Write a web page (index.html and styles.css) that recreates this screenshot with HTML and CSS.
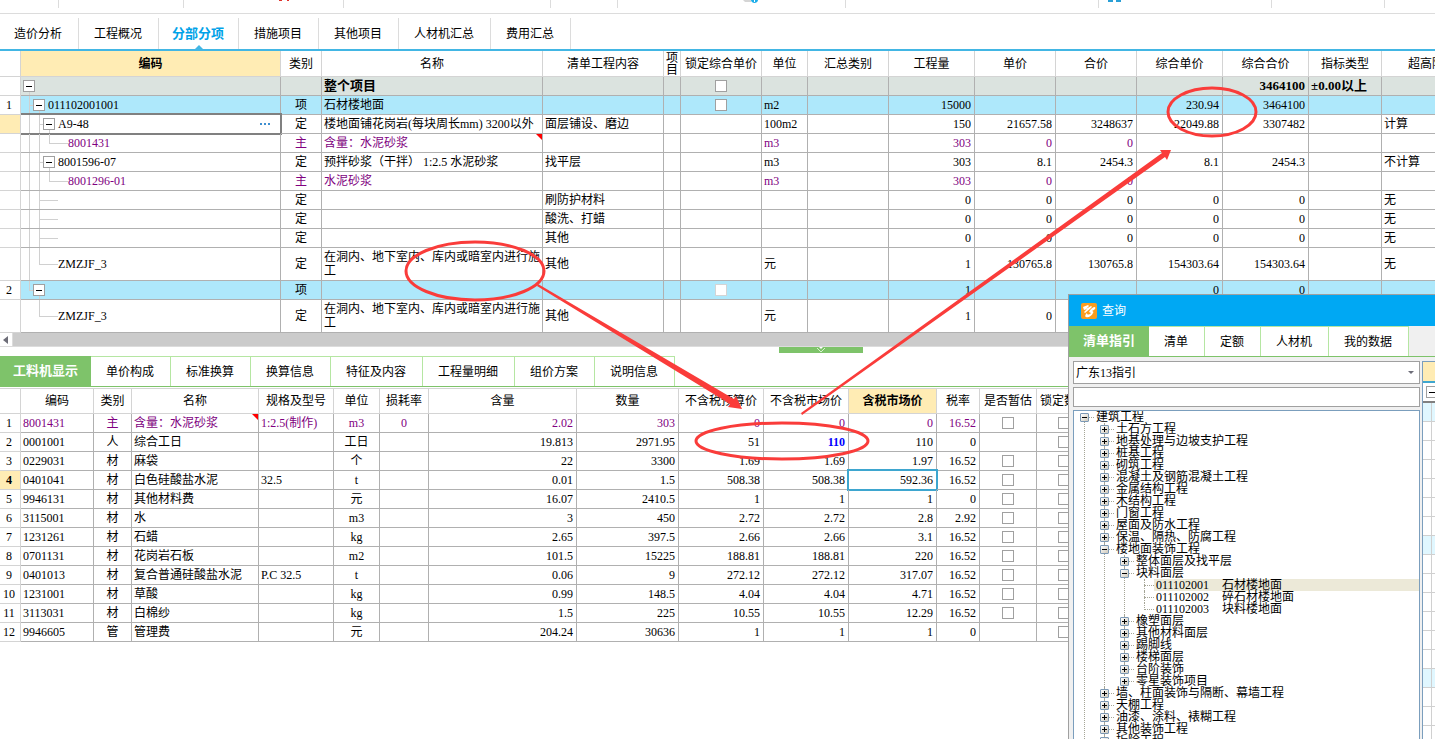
FILE: index.html
```html
<!DOCTYPE html>
<html lang="zh-CN">
<head>
<meta charset="utf-8">
<title>分部分项</title>
<link rel="stylesheet" href="styles.css">
</head>
<body>
<main class="app">
<div class="toolbar">
<span class="group w1"></span><span class="group w2"></span>
<span class="group w3"><svg width="10" height="2" viewBox="0 0 10 2"><path d="M0 0h3M8 0h2" stroke="#e0322c" stroke-width="2"/></svg></span>
<span class="group w4"></span><span class="group w5"></span>
<span class="group w6"><svg width="16" height="4" viewBox="0 0 16 4"><path d="M0 0h8v2H2z" fill="#d5d5d5"/><path d="M8 0h7c0 2-2 3-3.500 3S8 2 8 0z" fill="#1badea"/><path d="M11.500 0v2" stroke="#fff"/></svg></span>
<span class="group w7"></span>
<span class="group w8"><svg width="14" height="2" viewBox="0 0 14 2"><path d="M0 0h5v2H0zM8 0h5v2H8z" fill="#2a9fd6"/></svg></span>
<span class="group w9"></span>
</div>
<nav class="tabs top-tabs">
<button class="tab">造价分析</button><button class="tab">工程概况</button><button class="tab active">分部分项</button><button class="tab">措施项目</button><button class="tab">其他项目</button><button class="tab">人材机汇总</button><button class="tab">费用汇总</button>
</nav>

<div class="grid-view">
<table class="grid bill">
<colgroup><col class="c21"><col class="c260"><col class="c41"><col class="c221"><col class="c121"><col class="c17"><col class="c81"><col class="c46"><col class="c81"><col class="c86"><col class="c81"><col class="c81"><col class="c86"><col class="c86"><col class="c73"><col class="c101"></colgroup>
<thead><tr><th></th><th class="current">编码</th><th>类别</th><th>名称</th><th>清单工程内容</th><th class="narrow">项目</th><th>锁定综合单价</th><th>单位</th><th>汇总类别</th><th>工程量</th><th>单价</th><th>合价</th><th>综合单价</th><th>综合合价</th><th>指标类型</th><th>超高降效</th></tr></thead>
<tbody>
<tr class="total"><td class="no"></td><td class="code"><div class="branch"><button class="toggle root" aria-label="折叠"></button></div></td><td></td><td>整个项目</td><td></td><td></td><td class="mid"><input type="checkbox" aria-label="锁定综合单价"></td><td></td><td></td><td></td><td></td><td></td><td></td><td class="num">3464100</td><td>±0.00以上</td><td></td></tr>
<tr class="item"><td class="no">1</td><td class="code"><div class="branch"><i class="tee"></i><button class="toggle" aria-label="折叠"></button>011102001001</div></td><td class="mid">项</td><td>石材楼地面</td><td></td><td></td><td class="mid"><input type="checkbox" aria-label="锁定综合单价"></td><td>m2</td><td></td><td class="num">15000</td><td></td><td></td><td class="num">230.94</td><td class="num">3464100</td><td></td><td></td></tr>
<tr><td class="no now"></td><td class="code editing"><div class="branch"><i class="bar"></i><i class="tee"></i><button class="toggle" aria-label="折叠"></button>A9-48<button class="more" aria-label="更多"><b></b><b></b><b></b></button></div></td><td class="mid">定</td><td>楼地面铺花岗岩(每块周长mm) 3200以外</td><td>面层铺设、磨边</td><td></td><td></td><td>100m2</td><td></td><td class="num">150</td><td class="num">21657.58</td><td class="num">3248637</td><td class="num">22049.88</td><td class="num">3307482</td><td></td><td>计算</td></tr>
<tr class="main"><td class="no"></td><td class="code"><div class="branch"><i class="bar"></i><i class="bar"></i><i class="end"></i>8001431</div></td><td class="mid">主</td><td class="note">含量：水泥砂浆</td><td></td><td></td><td></td><td>m3</td><td></td><td class="num">303</td><td class="num">0</td><td class="num">0</td><td></td><td></td><td></td><td></td></tr>
<tr><td class="no"></td><td class="code"><div class="branch"><i class="bar"></i><i class="tee"></i><button class="toggle" aria-label="折叠"></button>8001596-07</div></td><td class="mid">定</td><td>预拌砂浆（干拌） 1:2.5 水泥砂浆</td><td>找平层</td><td></td><td></td><td>m3</td><td></td><td class="num">303</td><td class="num">8.1</td><td class="num">2454.3</td><td class="num">8.1</td><td class="num">2454.3</td><td></td><td>不计算</td></tr>
<tr class="main"><td class="no"></td><td class="code"><div class="branch"><i class="bar"></i><i class="bar"></i><i class="end"></i>8001296-01</div></td><td class="mid">主</td><td>水泥砂浆</td><td></td><td></td><td></td><td>m3</td><td></td><td class="num">303</td><td class="num">0</td><td class="num">0</td><td></td><td></td><td></td><td></td></tr>
<tr><td class="no"></td><td class="code"><div class="branch"><i class="bar"></i><i class="tee long"></i></div></td><td class="mid">定</td><td></td><td>刷防护材料</td><td></td><td></td><td></td><td></td><td class="num">0</td><td class="num">0</td><td class="num">0</td><td class="num">0</td><td class="num">0</td><td></td><td>无</td></tr>
<tr><td class="no"></td><td class="code"><div class="branch"><i class="bar"></i><i class="tee long"></i></div></td><td class="mid">定</td><td></td><td>酸洗、打蜡</td><td></td><td></td><td></td><td></td><td class="num">0</td><td class="num">0</td><td class="num">0</td><td class="num">0</td><td class="num">0</td><td></td><td>无</td></tr>
<tr><td class="no"></td><td class="code"><div class="branch"><i class="bar"></i><i class="tee long"></i></div></td><td class="mid">定</td><td></td><td>其他</td><td></td><td></td><td></td><td></td><td class="num">0</td><td class="num">0</td><td class="num">0</td><td class="num">0</td><td class="num">0</td><td></td><td>无</td></tr>
<tr class="tall"><td class="no"></td><td class="code"><div class="branch"><i class="bar"></i><i class="end"></i>ZMZJF_3</div></td><td class="mid">定</td><td class="wrap">在洞内、地下室内、库内或暗室内进行施工</td><td>其他</td><td></td><td></td><td>元</td><td></td><td class="num">1</td><td class="num">130765.8</td><td class="num">130765.8</td><td class="num">154303.64</td><td class="num">154303.64</td><td></td><td>无</td></tr>
<tr class="item"><td class="no">2</td><td class="code"><div class="branch"><i class="end short"></i><button class="toggle" aria-label="折叠"></button></div></td><td class="mid">项</td><td></td><td></td><td></td><td class="mid"><input type="checkbox" class="faint" aria-label="锁定综合单价"></td><td></td><td></td><td class="num">1</td><td></td><td></td><td class="num">0</td><td class="num">0</td><td></td><td></td></tr>
<tr class="tall"><td class="no"></td><td class="code"><div class="branch"><i class="blank"></i><i class="end"></i>ZMZJF_3</div></td><td class="mid">定</td><td class="wrap">在洞内、地下室内、库内或暗室内进行施工</td><td>其他</td><td></td><td></td><td>元</td><td></td><td class="num">1</td><td class="num">0</td><td></td><td></td><td></td><td></td><td></td></tr>
</tbody>
</table>
</div>
<div class="scrollbar"><button class="scroll-left" aria-label="向左滚动"></button></div>
<div class="splitter"><button class="handle" aria-label="收起"><svg width="10" height="6" viewBox="0 0 10 6"><path d="M3 0h4L5 2z" fill="#fff"/><path d="M1 1l4 4 4-4" fill="none" stroke="#d8f3cf"/></svg></button></div>

<nav class="tabs green-tabs">
<button class="tab active">工料机显示</button><button class="tab">单价构成</button><button class="tab">标准换算</button><button class="tab">换算信息</button><button class="tab">特征及内容</button><button class="tab">工程量明细</button><button class="tab">组价方案</button><button class="tab">说明信息</button>
</nav>
<div class="grid-view lower">
<table class="grid detail">
<colgroup><col class="c21"><col class="c73"><col class="c38"><col class="c127"><col class="c75"><col class="c46"><col class="c49"><col class="c148"><col class="c102"><col class="c85"><col class="c85"><col class="c88"><col class="c43"><col class="c57"><col class="c55"></colgroup>
<thead><tr><th></th><th>编码</th><th>类别</th><th>名称</th><th>规格及型号</th><th>单位</th><th>损耗率</th><th>含量</th><th>数量</th><th>不含税预算价</th><th>不含税市场价</th><th class="current">含税市场价</th><th>税率</th><th>是否暂估</th><th>锁定数量</th></tr></thead>
<tbody>
<tr class="main"><td class="no">1</td><td>8001431</td><td class="mid">主</td><td class="note">含量：水泥砂浆</td><td>1:2.5(制作)</td><td class="mid">m3</td><td class="mid">0</td><td class="num">2.02</td><td class="num">303</td><td class="num">0</td><td class="num">0</td><td class="num">0</td><td class="num">16.52</td><td class="mid"><input type="checkbox" aria-label="是否暂估"></td><td class="mid"><input type="checkbox" aria-label="锁定数量"></td></tr>
<tr><td class="no">2</td><td>0001001</td><td class="mid">人</td><td>综合工日</td><td></td><td class="mid">工日</td><td></td><td class="num">19.813</td><td class="num">2971.95</td><td class="num">51</td><td class="num changed">110</td><td class="num">110</td><td class="num">0</td><td></td><td class="mid"><input type="checkbox" aria-label="锁定数量"></td></tr>
<tr><td class="no">3</td><td>0229031</td><td class="mid">材</td><td>麻袋</td><td></td><td class="mid">个</td><td></td><td class="num">22</td><td class="num">3300</td><td class="num">1.69</td><td class="num">1.69</td><td class="num">1.97</td><td class="num">16.52</td><td class="mid"><input type="checkbox" aria-label="是否暂估"></td><td class="mid"><input type="checkbox" aria-label="锁定数量"></td></tr>
<tr><td class="no now">4</td><td>0401041</td><td class="mid">材</td><td>白色硅酸盐水泥</td><td>32.5</td><td class="mid">t</td><td></td><td class="num">0.01</td><td class="num">1.5</td><td class="num">508.38</td><td class="num">508.38</td><td class="num focus">592.36</td><td class="num">16.52</td><td class="mid"><input type="checkbox" aria-label="是否暂估"></td><td class="mid"><input type="checkbox" aria-label="锁定数量"></td></tr>
<tr><td class="no">5</td><td>9946131</td><td class="mid">材</td><td>其他材料费</td><td></td><td class="mid">元</td><td></td><td class="num">16.07</td><td class="num">2410.5</td><td class="num">1</td><td class="num">1</td><td class="num">1</td><td class="num">0</td><td class="mid"><input type="checkbox" aria-label="是否暂估"></td><td class="mid"><input type="checkbox" aria-label="锁定数量"></td></tr>
<tr><td class="no">6</td><td>3115001</td><td class="mid">材</td><td>水</td><td></td><td class="mid">m3</td><td></td><td class="num">3</td><td class="num">450</td><td class="num">2.72</td><td class="num">2.72</td><td class="num">2.8</td><td class="num">2.92</td><td class="mid"><input type="checkbox" aria-label="是否暂估"></td><td class="mid"><input type="checkbox" aria-label="锁定数量"></td></tr>
<tr><td class="no">7</td><td>1231261</td><td class="mid">材</td><td>石蜡</td><td></td><td class="mid">kg</td><td></td><td class="num">2.65</td><td class="num">397.5</td><td class="num">2.66</td><td class="num">2.66</td><td class="num">3.1</td><td class="num">16.52</td><td class="mid"><input type="checkbox" aria-label="是否暂估"></td><td class="mid"><input type="checkbox" aria-label="锁定数量"></td></tr>
<tr><td class="no">8</td><td>0701131</td><td class="mid">材</td><td>花岗岩石板</td><td></td><td class="mid">m2</td><td></td><td class="num">101.5</td><td class="num">15225</td><td class="num">188.81</td><td class="num">188.81</td><td class="num">220</td><td class="num">16.52</td><td class="mid"><input type="checkbox" aria-label="是否暂估"></td><td class="mid"><input type="checkbox" aria-label="锁定数量"></td></tr>
<tr><td class="no">9</td><td>0401013</td><td class="mid">材</td><td>复合普通硅酸盐水泥</td><td>P.C 32.5</td><td class="mid">t</td><td></td><td class="num">0.06</td><td class="num">9</td><td class="num">272.12</td><td class="num">272.12</td><td class="num">317.07</td><td class="num">16.52</td><td class="mid"><input type="checkbox" aria-label="是否暂估"></td><td class="mid"><input type="checkbox" aria-label="锁定数量"></td></tr>
<tr><td class="no">10</td><td>1231001</td><td class="mid">材</td><td>草酸</td><td></td><td class="mid">kg</td><td></td><td class="num">0.99</td><td class="num">148.5</td><td class="num">4.04</td><td class="num">4.04</td><td class="num">4.71</td><td class="num">16.52</td><td class="mid"><input type="checkbox" aria-label="是否暂估"></td><td class="mid"><input type="checkbox" aria-label="锁定数量"></td></tr>
<tr><td class="no">11</td><td>3113031</td><td class="mid">材</td><td>白棉纱</td><td></td><td class="mid">kg</td><td></td><td class="num">1.5</td><td class="num">225</td><td class="num">10.55</td><td class="num">10.55</td><td class="num">12.29</td><td class="num">16.52</td><td class="mid"><input type="checkbox" aria-label="是否暂估"></td><td class="mid"><input type="checkbox" aria-label="锁定数量"></td></tr>
<tr><td class="no">12</td><td>9946605</td><td class="mid">管</td><td>管理费</td><td></td><td class="mid">元</td><td></td><td class="num">204.24</td><td class="num">30636</td><td class="num">1</td><td class="num">1</td><td class="num">1</td><td class="num">0</td><td></td><td class="mid"><input type="checkbox" aria-label="锁定数量"></td></tr>
</tbody>
</table>
</div>

<section class="dialog" aria-label="查询">
<header class="title"><svg width="16" height="16" viewBox="0 0 16 16"><rect width="16" height="16" rx="2" fill="#fb9d1e"/><path d="M2 4l5-2 1 1-3 3 5-3c1 0 1 1 0 2L4 10 3 9l3-3-3 1z" fill="#fff"/><path d="M14 4c1 1 0 3-3 4 1 0 2 1 1 2-1 3-5 5-7 4-1 0-1-2 0-3l1-1c0 2 2 2 4 0l-2-1c1-3 4-5 6-5z" fill="#fff"/></svg>查询</header>
<nav class="tabs green-tabs dialog-tabs"><button class="tab active">清单指引</button><button class="tab">清单</button><button class="tab">定额</button><button class="tab">人材机</button><button class="tab">我的数据</button></nav>
<div class="dialog-body">
<div class="query">
<div class="select-box"><select aria-label="指引"><option>广东13指引</option></select></div>
<input class="search" type="text" aria-label="查找">
<div class="tree">
<ul>
<li><div class="node"><button class="box minus" aria-label="折叠"></button><span>建筑工程</span></div>
<ul>
<li><div class="node"><button class="box" aria-label="展开"></button><span>土石方工程</span></div></li>
<li><div class="node"><button class="box" aria-label="展开"></button><span>地基处理与边坡支护工程</span></div></li>
<li><div class="node"><button class="box" aria-label="展开"></button><span>桩基工程</span></div></li>
<li><div class="node"><button class="box" aria-label="展开"></button><span>砌筑工程</span></div></li>
<li><div class="node"><button class="box" aria-label="展开"></button><span>混凝土及钢筋混凝土工程</span></div></li>
<li><div class="node"><button class="box" aria-label="展开"></button><span>金属结构工程</span></div></li>
<li><div class="node"><button class="box" aria-label="展开"></button><span>木结构工程</span></div></li>
<li><div class="node"><button class="box" aria-label="展开"></button><span>门窗工程</span></div></li>
<li><div class="node"><button class="box" aria-label="展开"></button><span>屋面及防水工程</span></div></li>
<li><div class="node"><button class="box" aria-label="展开"></button><span>保温、隔热、防腐工程</span></div></li>
<li><div class="node"><button class="box minus" aria-label="折叠"></button><span>楼地面装饰工程</span></div>
<ul>
<li><div class="node"><button class="box" aria-label="展开"></button><span>整体面层及找平层</span></div></li>
<li><div class="node"><button class="box minus" aria-label="折叠"></button><span>块料面层</span></div>
<ul>
<li><div class="node leaf selected"><span><b>011102001</b>石材楼地面</span></div></li>
<li><div class="node leaf"><span><b>011102002</b>碎石材楼地面</span></div></li>
<li class="last"><div class="node leaf"><span><b>011102003</b>块料楼地面</span></div></li>
</ul></li>
<li><div class="node"><button class="box" aria-label="展开"></button><span>橡塑面层</span></div></li>
<li><div class="node"><button class="box" aria-label="展开"></button><span>其他材料面层</span></div></li>
<li><div class="node"><button class="box" aria-label="展开"></button><span>踢脚线</span></div></li>
<li><div class="node"><button class="box" aria-label="展开"></button><span>楼梯面层</span></div></li>
<li><div class="node"><button class="box" aria-label="展开"></button><span>台阶装饰</span></div></li>
<li class="last"><div class="node"><button class="box" aria-label="展开"></button><span>零星装饰项目</span></div></li>
</ul></li>
<li><div class="node"><button class="box" aria-label="展开"></button><span>墙、柱面装饰与隔断、幕墙工程</span></div></li>
<li><div class="node"><button class="box" aria-label="展开"></button><span>天棚工程</span></div></li>
<li><div class="node"><button class="box" aria-label="展开"></button><span>油漆、涂料、裱糊工程</span></div></li>
<li><div class="node"><button class="box" aria-label="展开"></button><span>其他装饰工程</span></div></li>
<li><div class="node"><button class="box" aria-label="展开"></button><span>拆除工程</span></div></li>
</ul></li>
</ul>
</div>
</div>
<div class="side">
<div class="side-head"></div>
<div class="side-row first"><button class="toggle" aria-label="折叠"></button></div>
<div class="side-row tint"></div><div class="side-row"></div><div class="side-row"></div><div class="side-row"></div><div class="side-row"></div><div class="side-row"></div><div class="side-row"></div><div class="side-row tint"></div><div class="side-row"></div><div class="side-row"></div><div class="side-row"></div><div class="side-row"></div><div class="side-row"></div><div class="side-row"></div><div class="side-row tint"></div><div class="side-row"></div><div class="side-row"></div><div class="side-row"></div>
</div>
</div>
</section>

<svg class="marks" width="1435" height="739" viewBox="0 0 1435 739" aria-hidden="true">
<g fill="none" stroke="#fa3c3a" stroke-width="3"><ellipse cx="475" cy="271" rx="69" ry="29"/><ellipse cx="1212" cy="112" rx="44" ry="24"/><ellipse cx="782" cy="441" rx="86" ry="18"/></g>
<g fill="#fa3c3a"><path d="M538 284L734 399l2-3 6 13-14-2 2-3L537 286z"/><path d="M801 413L1162 153l-2-3 11 0-4 10-2-3L802 415z"/></g>
</svg>
</main>
</body>
</html>
```
FILE: styles.css
```css
* { box-sizing: border-box; }
body { margin: 0; overflow: hidden; background: #fff; color: #000; font: 12px/14px "Liberation Serif", "Noto Sans CJK SC", serif; }
button, input, select { font: inherit; color: inherit; margin: 0; padding: 0; border: 0; border-radius: 0; background: none; }
.app { position: relative; height: 100vh; overflow: hidden; display: flex; flex-direction: column; }
.app > * { flex: none; }

.toolbar { display: flex; height: 14px; border-bottom: 1px solid #dcdcdc; overflow: hidden; }
.group { flex: none; height: 8px; border-right: 1px solid #dcdcdc; display: flex; align-items: flex-start; justify-content: center; }
.w1 { width: 59px; } .w2 { width: 125px; }
.w3 { width: 160px; padding-left: 40px; }
.w4 { width: 207px; } .w5 { width: 67px; }
.w6 { width: 228px; padding-left: 38px; }
.w7 { width: 253px; }
.w8 { width: 173px; justify-content: flex-start; padding-left: 9px; }
.w9 { width: 113px; }

.tabs { display: flex; align-items: stretch; }
.tab { padding: 0 16px 0 15px; white-space: nowrap; }
.tab.active { font-size: 13px; font-weight: bold; position: relative; }
.top-tabs { height: 37px; padding-top: 4px; border-bottom: 2px solid #42b6e4; }
.top-tabs .tab { border-right: 1px solid #dcdcdc; }
.top-tabs .tab:first-child { padding-left: 14px; }
.top-tabs .tab.active { padding: 0 14px 0 13px; color: #00a2e8; }
.top-tabs .tab.active::after { content: ""; position: absolute; left: 50%; bottom: 0; margin-left: -4px; border: 4px solid transparent; border-top: 0; border-bottom-color: #42b6e4; }

.grid-view { overflow: hidden; }
.lower { margin-top: 1px; border-top: 1px solid #d4d4d4; }
.grid { table-layout: fixed; border-collapse: separate; border-spacing: 0; }
.bill { width: 1463px; }
.detail { width: 1092px; }
.c17 { width: 17px; } .c21 { width: 21px; } .c38 { width: 38px; } .c41 { width: 41px; } .c43 { width: 43px; }
.c46 { width: 46px; } .c49 { width: 49px; } .c55 { width: 55px; } .c57 { width: 57px; } .c73 { width: 73px; }
.c75 { width: 75px; } .c81 { width: 81px; } .c85 { width: 85px; } .c86 { width: 86px; } .c88 { width: 88px; }
.c101 { width: 101px; } .c102 { width: 102px; } .c121 { width: 121px; } .c127 { width: 127px; } .c148 { width: 148px; }
.c221 { width: 221px; } .c260 { width: 260px; }
.grid th { height: 25px; padding: 0; font-weight: normal; white-space: nowrap; border-right: 1px solid #d4d4d4; border-bottom: 1px solid #d4d4d4; }
.bill th { height: 26px; }
.grid .narrow { white-space: normal; line-height: 12px; padding: 0 2px; }
.grid th.current { background: #ffecb4; font-weight: bold; }
.grid td { position: relative; height: 19px; padding: 0 3px 0 2px; white-space: nowrap; border-right: 1px solid #b0b0b0; border-bottom: 1px solid #b0b0b0; }
.grid .tall td { height: 33px; }
.grid td.mid { text-align: center; padding: 0; }
.grid td.num { text-align: right; }
.grid td.wrap { white-space: normal; padding-right: 0; }
.grid td.no { text-align: center; padding: 0 2px 0 0; background: #fff; border-color: #d4d4d4; }
.grid td.now { background: #ffecb4; font-weight: bold; }
.total td { background: #dbe3df; font-size: 13px; font-weight: bold; }
.item td { background: #aee8fb; }
.main td { color: #800080; }
.grid .main td.no { color: #000; }
.grid td.changed { color: #00f; font-weight: bold; }
.note::after { content: ""; position: absolute; top: 0; right: 0; border: 3px solid #f00; border-left-color: transparent; border-bottom-color: transparent; }
.focus::after { content: ""; position: absolute; inset: -2px; border: 2px solid #3ea6cf; }
.editing::after { content: ""; position: absolute; inset: -2px -2px -2px 0; border: 2px solid #808080; border-left: 0; pointer-events: none; }

input[type=checkbox] { appearance: none; display: block; width: 12px; height: 12px; margin: 0 auto; border: 1px solid #a0a0a0; background: #fff; }
input[type=checkbox].faint { border-color: #d4d4d4; }

.grid td.code { padding: 0; }
.branch { display: flex; align-items: center; height: 100%; padding-left: 8px; }
.branch i { flex: none; align-self: stretch; position: relative; width: 10px; }
.branch i.bar, .branch i.tee { border-left: 1px solid #d0d0d0; }
.branch i.tee::after { content: ""; position: absolute; left: 0; top: 50%; width: 4px; border-top: 1px solid #d0d0d0; }
.branch i.tee.long::after { width: 18px; }
.branch i.end { width: 19px; }
.branch i.end::after { content: ""; position: absolute; left: 0; top: 0; width: 18px; height: 50%; border: solid #d0d0d0; border-width: 0 0 1px 1px; }
.branch i.end.short { width: 10px; }
.branch i.end.short::after { width: 4px; }
.toggle { flex: none; position: relative; width: 12px; height: 12px; margin: 0 3px 0 -6px; border: 1px solid #a0a0a0; background: linear-gradient(#000, #000) center / 6px 1px no-repeat #fff; }
.branch .toggle::after { content: ""; position: absolute; left: 5px; top: 11px; height: 3px; border-left: 1px solid #d0d0d0; }
.more { display: flex; gap: 2px; margin-left: auto; padding-right: 10px; }
.more b { width: 2px; height: 2px; background: #3e8fd0; }

.scrollbar { display: flex; height: 14px; background: #cbcbcb; border-bottom: 1px solid #dcdcdc; }
.scroll-left { width: 13px; background: #fff; border-right: 1px solid #dcdcdc; }
.scroll-left::before { content: ""; display: block; width: 0; margin-left: 3px; border: 4px solid transparent; border-left: 0; border-right: 5px solid #6d6d78; }
.splitter { height: 9px; display: flex; padding-left: 779px; }
.handle { width: 84px; height: 6px; background: #7ec36a; display: flex; justify-content: center; }

.green-tabs { height: 31px; border-bottom: 1px solid #7ec36a; }
.green-tabs .tab { border-top: 1px solid #b5e6a2; border-right: 1px solid #b5e6a2; background: #fff; }
.green-tabs .tab.active { padding: 0 13px; border: 0; background: #7ec36a; color: #fff; }

.dialog { position: absolute; left: 1068px; top: 294px; right: 0; bottom: 0; display: flex; flex-direction: column; background: #f0f0f0; border: solid #a0a0a0; border-width: 1px 0 0 1px; overflow: hidden; }
.title { flex: none; display: flex; align-items: center; gap: 5px; height: 31px; padding-left: 12px; background: #00a8f3; color: #fff; }
.dialog .dialog-tabs { flex: none; }
.dialog-tabs .tab.active { padding: 0 14px; }
.dialog-body { flex: 1; min-height: 0; display: flex; gap: 2px; padding: 4px 0 0 4px; }
.query { flex: none; width: 347px; display: flex; flex-direction: column; min-height: 0; }
.select-box { position: relative; flex: none; height: 23px; border: 1px solid #a0a0a0; background: #fff; }
.select-box select { appearance: none; width: 100%; height: 21px; padding-left: 2px; outline: 0; }
.select-box::after { content: ""; position: absolute; right: 5px; top: 9px; border: 3px solid transparent; border-top-color: #6d6d78; border-bottom: 0; pointer-events: none; }
.search { flex: none; height: 20px; margin: 3px 0; border: 1px solid #a0a0a0; background: #fff; padding: 0 2px; }
.tree { flex: 1; min-height: 0; overflow: hidden; border: 1px solid #7b9ebd; border-bottom: 0; background: #fff; }
.tree ul { list-style: none; margin: 0; padding: 0 0 0 20px; }
.tree > ul { padding-left: 6px; }
.tree li { position: relative; }
.tree li::before { content: ""; position: absolute; left: 4px; top: 0; bottom: 0; border-left: 1px dotted #a5a596; }
.tree > ul > li::before { top: 6px; }
.tree li.last::before { bottom: auto; height: 7px; }
.node { display: flex; align-items: center; height: 12px; line-height: 12px; white-space: nowrap; }
.node::before { content: ""; order: 1; width: 5px; border-top: 1px dotted #a5a596; }
.node span { order: 2; padding-left: 2px; }
.node b { display: inline-block; width: 66px; font-weight: normal; }
.leaf::before { width: 10px; margin-left: 4px; }
.leaf span { flex: 1; }
.selected span { background: #ece9d8; }
.box { position: relative; flex: none; width: 9px; height: 9px; border: 1px solid #7b98b5; border-radius: 1px; background: linear-gradient(#000, #000) center / 5px 1px no-repeat, linear-gradient(#000, #000) center / 1px 5px no-repeat, linear-gradient(135deg, #fff, #cfc9bb); }
.box.minus { background: linear-gradient(#000, #000) center / 5px 1px no-repeat, linear-gradient(135deg, #fff, #cfc9bb); }
.side { flex: 1; min-width: 0; overflow: hidden; border: 1px solid #7b9ebd; border-right: 0; border-bottom: 0; background: #fff; }
.side-head { height: 21px; background: #ffecb4; border-bottom: 2px solid #3ea6cf; }
.side-row { height: 19px; border-bottom: 1px solid #d0d0d0; padding-left: 8px; }
.side-row::before { content: ""; display: block; height: 100%; border-left: 1px solid #d0d0d0; }
.side-row.tint { background: #e0f7ff; }
.side-row.first { height: 20px; padding: 3px 0 0 9px; border-bottom: 2px solid #808080; }
.side-row.first::before { display: none; }
.side .toggle { display: block; }
.marks { position: absolute; left: 0; top: 0; pointer-events: none; }
```
